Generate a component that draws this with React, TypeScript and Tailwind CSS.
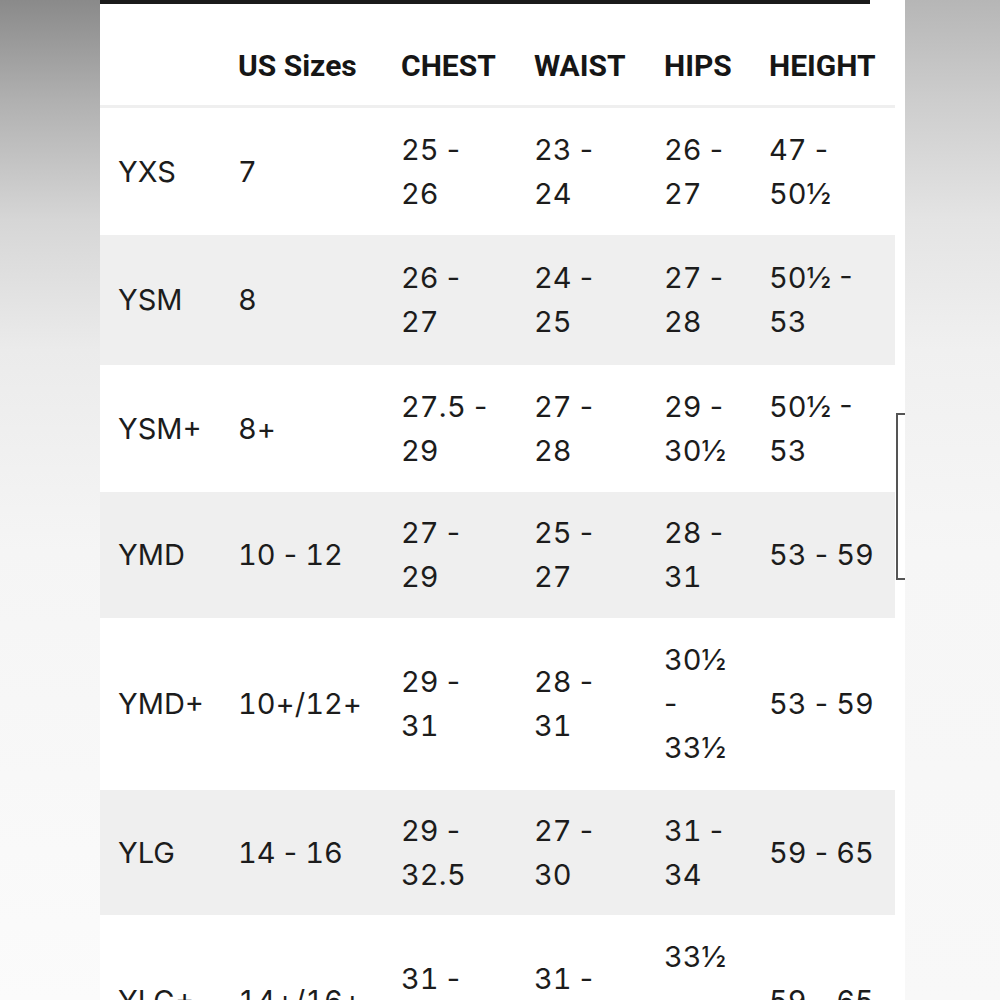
import React from "react";

type Row = { h: number; grey: boolean; cells: string[][] };

const rows: Row[] = [
  { h: 127, grey: false, cells: [["YXS"], ["7"], ["25 -", "26"], ["23 -", "24"], ["26 -", "27"], ["47 -", "50½"]] },
  { h: 130, grey: true, cells: [["YSM"], ["8"], ["26 -", "27"], ["24 -", "25"], ["27 -", "28"], ["50½ -", "53"]] },
  { h: 127, grey: false, cells: [["YSM+"], ["8+"], ["27.5 -", "29"], ["27 -", "28"], ["29 -", "30½"], ["50½ -", "53"]] },
  { h: 126, grey: true, cells: [["YMD"], ["10 - 12"], ["27 -", "29"], ["25 -", "27"], ["28 -", "31"], ["53 - 59"]] },
  { h: 172, grey: false, cells: [["YMD+"], ["10+/12+"], ["29 -", "31"], ["28 -", "31"], ["30½", "-", "33½"], ["53 - 59"]] },
  { h: 125, grey: true, cells: [["YLG"], ["14 - 16"], ["29 -", "32.5"], ["27 -", "30"], ["31 -", "34"], ["59 - 65"]] },
  { h: 172, grey: false, cells: [["YLG+"], ["14+/16+"], ["31 -", "34"], ["31 -", "33"], ["33½", "-", "36½"], ["59 - 65"]] },
];

const headers = ["", "US Sizes", "CHEST", "WAIST", "HIPS", "HEIGHT"];

function Line({ text }: { text: string }) {
  const parts = text.split(/(\d+)/).filter((p) => p.length > 0);
  return (
    <span className="whitespace-nowrap">
      {parts.map((p, i) =>
        /^\d+$/.test(p) ? (
          <span key={i} className="tabular-nums">{p}</span>
        ) : (
          <span key={i}>{p}</span>
        )
      )}
    </span>
  );
}

export default function App() {
  return (
    <div className="relative flex h-[1000px] w-[1000px] overflow-hidden bg-white" style={{ fontFamily: "Roboto, 'Liberation Sans', sans-serif" }}>
      <div className="h-full w-[100px] shrink-0 bg-[linear-gradient(to_bottom,#8a8a8a_0%,#b0b0b0_10%,#d6d6d6_22%,#ebebeb_35%,#f5f5f5_55%,#fbfbfb_100%)]" />
      <div className="flex h-full w-[805px] shrink-0 flex-col bg-white">
        <div className="h-[4px] w-[770px] shrink-0 bg-[#1a1a1a]" />
        <div className="w-[795px] shrink-0">
          <div className="grid h-[104px] grid-cols-[120px_163px_133px_130px_105px_144px] items-end border-b-[3px] border-[#efefef] pb-[17px]">
            {headers.map((t, i) => (
              <div key={i} className="pl-[18px] text-[30px] font-bold leading-[44px] text-[#161616]">
                {t}
              </div>
            ))}
          </div>
          {rows.map((r, ri) => (
            <div
              key={ri}
              className={`grid grid-cols-[120px_163px_133px_130px_105px_144px] items-center ${r.grey ? "bg-[#efefef]" : "bg-white"}`}
              style={{ height: r.h }}
            >
              {r.cells.map((c, ci) => (
                <div key={ci} className="flex flex-col pl-[18px] font-['Inter',sans-serif] text-[29px] leading-[44px] text-[#1c1c1c]">
                  {c.map((l, li) => (
                    <Line key={li} text={l} />
                  ))}
                </div>
              ))}
            </div>
          ))}
        </div>
      </div>
      <div className="h-full flex-1 bg-[linear-gradient(to_bottom,#b6b6b6_0%,#cdcdcd_10%,#e4e4e4_22%,#f0f0f0_35%,#f6f6f6_55%,#f8f8f8_100%)]" />
      <div className="absolute left-[896px] top-[413px] h-[167px] w-[9px] border-y-[2px] border-l-[2px] border-[#555555]" />
    </div>
  );
}
